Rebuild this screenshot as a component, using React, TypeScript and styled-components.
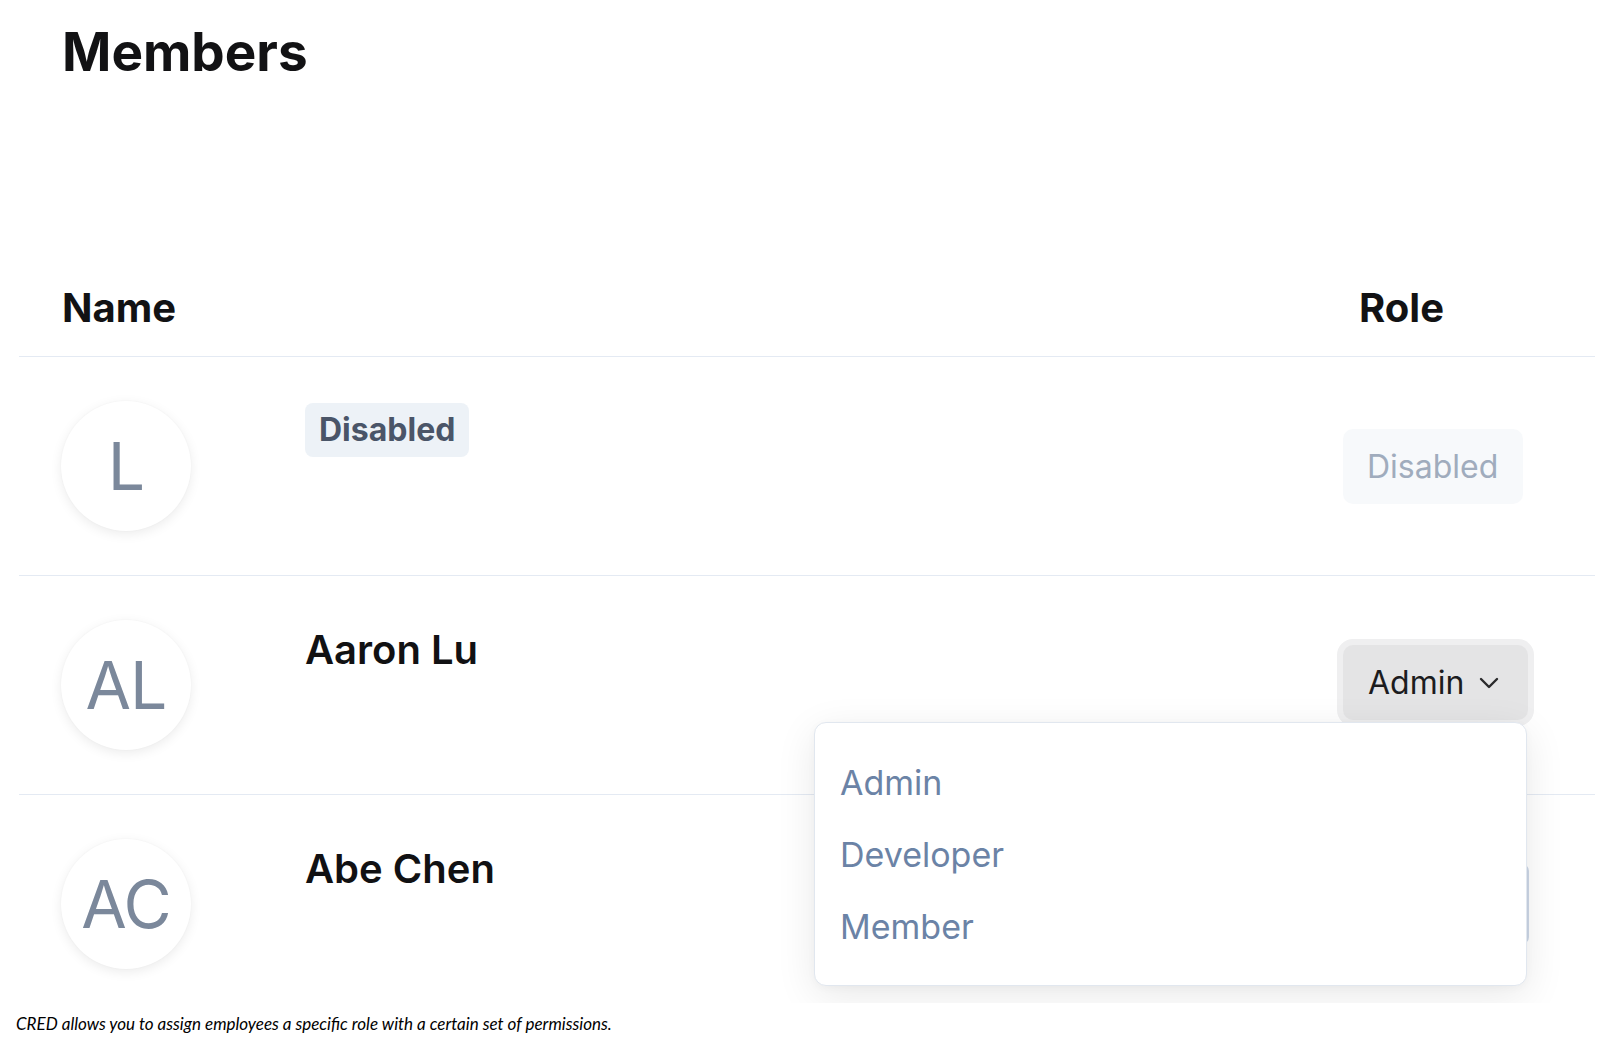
import React from "react";
import styled, { createGlobalStyle } from "styled-components";

const GlobalStyle = createGlobalStyle`
  html, body {
    margin: 0;
    padding: 0;
    background: #ffffff;
  }
  body {
    font-family: Inter, "Noto Sans", sans-serif;
    color: #141416;
    -webkit-font-smoothing: antialiased;
  }
  * {
    box-sizing: border-box;
  }
`;

const Page = styled.div`
  width: 1600px;
  height: 1043px;
  background: #ffffff;
  overflow: hidden;
`;

const Screen = styled.section`
  position: relative;
  width: 1595px;
  height: 1003px;
  overflow: hidden;
  background: #ffffff;
`;

const Title = styled.h1`
  margin: 0;
  padding: 20px 0 0 62px;
  font-size: 53px;
  line-height: 65px;
  font-weight: 700;
  color: #121214;
`;

const Table = styled.div`
  margin: 199px 0 0 19px;
  display: flex;
  flex-direction: column;
`;

const Grid = styled.div`
  display: grid;
  grid-template-columns: 286px 1038px 1fr;
  border-bottom: 1px solid #e4eaf3;
`;

const HeaderRow = styled(Grid)`
  padding-bottom: 24px;
`;

const HeaderCell = styled.div<{ $pad: number; $span?: number }>`
  grid-column: span ${(p) => p.$span ?? 1};
  padding-left: ${(p) => p.$pad}px;
  font-size: 40px;
  line-height: 48px;
  font-weight: 700;
  color: #121214;
`;

const Row = styled(Grid)`
  padding: 44px 0;
`;

const AvatarCell = styled.div`
  padding-left: 42px;
`;

const Avatar = styled.div`
  width: 130px;
  height: 130px;
  border-radius: 50%;
  background: #ffffff;
  box-shadow: 0 3px 12px rgba(0, 0, 0, 0.08), 0 0 2px rgba(0, 0, 0, 0.04);
  display: flex;
  align-items: center;
  justify-content: center;
  font-size: 66px;
  font-weight: 400;
  color: #7b889b;
  letter-spacing: -1px;
`;

const NameCell = styled.div`
  padding-top: 2px;
  display: flex;
  align-items: flex-start;
`;

const Name = styled.span`
  margin-top: 2px;
  font-size: 40px;
  line-height: 52px;
  font-weight: 600;
  color: #111113;
`;

const Badge = styled.span`
  display: inline-block;
  height: 54px;
  padding: 0 14px;
  border-radius: 8px;
  background: #edf2f7;
  color: #4a5568;
  font-size: 32px;
  line-height: 54px;
  font-weight: 700;
`;

const RoleCell = styled.div`
  align-self: center;
  display: flex;
`;

const Anchor = styled.div`
  position: relative;
`;

const RoleButton = styled.button<{ $variant: "disabled" | "active" | "outline" }>`
  display: inline-flex;
  align-items: center;
  justify-content: flex-start;
  gap: 15px;
  width: ${(p) => (p.$variant === "disabled" ? 180 : p.$variant === "active" ? 185 : 186)}px;
  height: ${(p) => (p.$variant === "outline" ? 80 : 75)}px;
  margin-bottom: ${(p) => (p.$variant === "active" ? 5 : 0)}px;
  padding: ${(p) => (p.$variant === "disabled" ? "0 0 0 24px" : "0 0 0 25px")};
  border-radius: ${(p) => (p.$variant === "outline" ? 7 : 10)}px;
  border: ${(p) => (p.$variant === "outline" ? "2px solid #cdd8e7" : "none")};
  background: ${(p) =>
    p.$variant === "disabled" ? "#f7f9fb" : p.$variant === "active" ? "#e4e4e5" : "#ffffff"};
  color: ${(p) => (p.$variant === "disabled" ? "#a0acbd" : "#1c1c1e")};
  box-shadow: ${(p) => (p.$variant === "active" ? "0 0 0 6px #efeff0" : "none")};
  font-family: inherit;
  font-size: 32px;
  font-weight: 400;
  cursor: pointer;
`;

const Chevron = () => (
  <svg width="20" height="12" viewBox="0 0 20 12" fill="none" aria-hidden="true">
    <polyline
      points="2,2 10,10 18,2"
      stroke="#2a2a2c"
      strokeWidth="2.4"
      strokeLinecap="round"
      strokeLinejoin="round"
    />
  </svg>
);

const Menu = styled.ul`
  position: absolute;
  z-index: 10;
  top: calc(100% - 3px);
  right: 1px;
  width: 713px;
  margin: 0;
  padding: 24px 0 22px;
  list-style: none;
  background: #ffffff;
  border: 1px solid #e1e7ef;
  border-radius: 12px;
  box-shadow: 0 10px 40px rgba(0, 0, 0, 0.09), 0 2px 8px rgba(0, 0, 0, 0.03);
`;

const MenuItem = styled.li`
  height: 72px;
  padding: 0 25px;
  font-size: 34px;
  line-height: 72px;
  color: #6b83a6;
`;

const Caption = styled.p`
  margin: 0;
  padding: 11px 0 0 16px;
  font-family: Lato, "Open Sans", sans-serif;
  font-style: italic;
  font-size: 17px;
  line-height: 20px;
  color: #000000;
`;

type Member = {
  initials: string;
  name?: string;
  role: "disabled" | "active" | "outline";
  roleLabel: string;
  open?: boolean;
};

const members: Member[] = [
  { initials: "L", role: "disabled", roleLabel: "Disabled" },
  { initials: "AL", name: "Aaron Lu", role: "active", roleLabel: "Admin", open: true },
  { initials: "AC", name: "Abe Chen", role: "outline", roleLabel: "Member" },
];

const roles = ["Admin", "Developer", "Member"];

export default function App() {
  return (
    <Page>
      <GlobalStyle />
      <Screen>
        <Title>Members</Title>
        <Table>
          <HeaderRow>
            <HeaderCell $pad={43} $span={2}>
              Name
            </HeaderCell>
            <HeaderCell $pad={16}>Role</HeaderCell>
          </HeaderRow>
          {members.map((m) => (
            <Row key={m.initials}>
              <AvatarCell>
                <Avatar>{m.initials}</Avatar>
              </AvatarCell>
              <NameCell>{m.name ? <Name>{m.name}</Name> : <Badge>Disabled</Badge>}</NameCell>
              <RoleCell>
                <Anchor>
                  <RoleButton $variant={m.role} disabled={m.role === "disabled"}>
                    {m.roleLabel}
                    {m.role !== "disabled" && <Chevron />}
                  </RoleButton>
                  {m.open && (
                    <Menu>
                      {roles.map((r) => (
                        <MenuItem key={r}>{r}</MenuItem>
                      ))}
                    </Menu>
                  )}
                </Anchor>
              </RoleCell>
            </Row>
          ))}
        </Table>
      </Screen>
      <Caption>
        CRED allows you to assign employees a specific role with a certain set of permissions.
      </Caption>
    </Page>
  );
}
